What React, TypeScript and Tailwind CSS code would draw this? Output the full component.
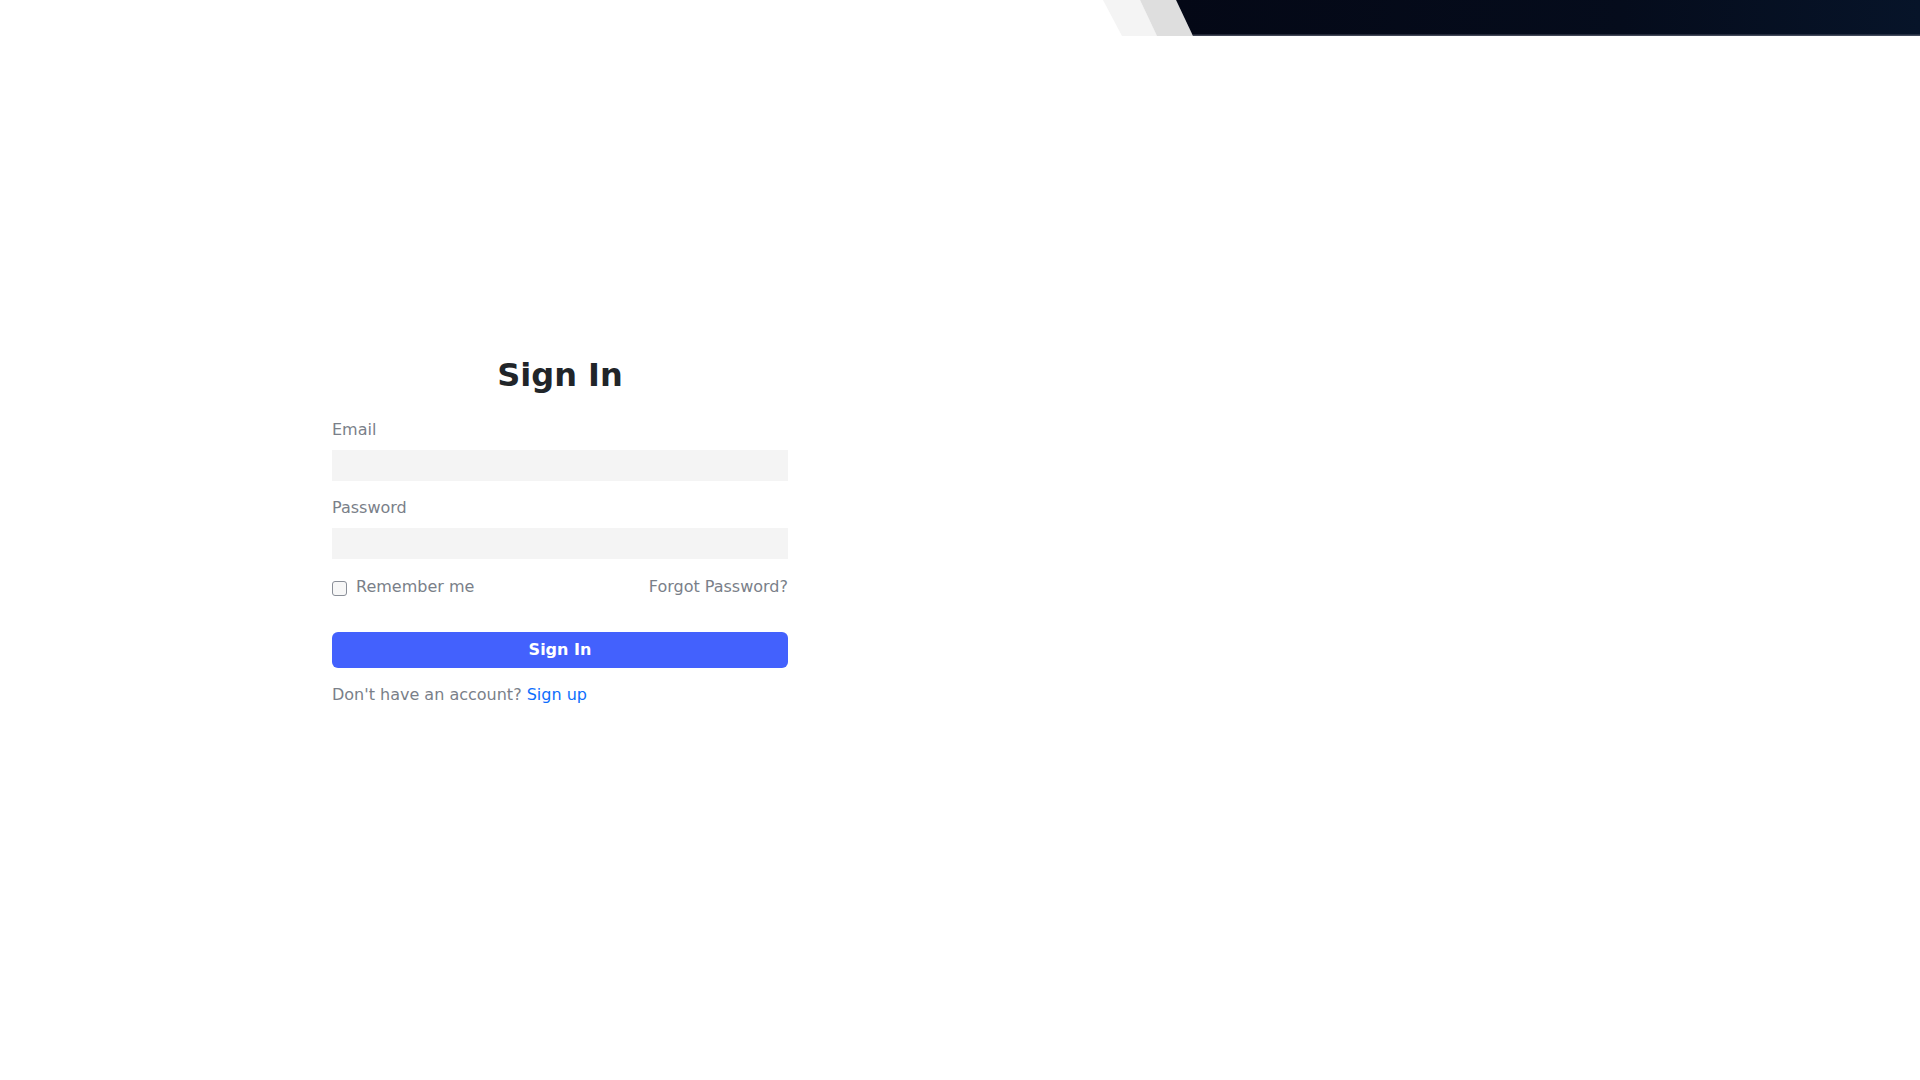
import React from "react";

export default function App() {
  return (
    <div className="min-h-screen w-full bg-white" style={{ fontFamily: '"DejaVu Sans", sans-serif' }}>
      <div className="flex h-[36px] justify-end">
        <svg width="818" height="36" viewBox="0 0 818 36" className="block">
          <defs>
            <linearGradient id="dk" x1="0" y1="0" x2="1" y2="0">
              <stop offset="0" stopColor="#040816" />
              <stop offset="0.6" stopColor="#050c1c" />
              <stop offset="1" stopColor="#071429" />
            </linearGradient>
          </defs>
          <polygon points="1,0 38,0 55,36 20,36" fill="#f4f4f4" />
          <polygon points="38,0 74,0 91,36 55,36" fill="#dedede" />
          <polygon points="74,0 818,0 818,36 91,36" fill="url(#dk)" />
          <rect x="91" y="34.5" width="727" height="1.5" fill="#6b7080" opacity="0.6" />
        </svg>
      </div>
      <div className="ml-[332px] mt-[320px] w-[456px]">
        <h2 className="text-center text-[32px] font-bold leading-[38.4px] text-[#212529]">Sign In</h2>
        <div className="mt-[24px]">
          <label className="block text-[16px] leading-[24px] text-[#7a7f89]">Email</label>
          <div className="mt-[7.5px] h-[31px] w-full bg-[#f4f4f4]" />
        </div>
        <div className="mt-[15.5px]">
          <label className="block text-[16px] leading-[24px] text-[#7a7f89]">Password</label>
          <div className="mt-[7.5px] h-[31px] w-full bg-[#f4f4f4]" />
        </div>
        <div className="mt-[16.5px] flex h-[24px] items-center justify-between text-[16px] leading-[24px] text-[#7a7f89]">
          <div className="flex items-center">
            <span className="mt-[3px] h-[15px] w-[15px] rounded-[3px] border border-[#8a8f98] bg-[#f7f7f7]" />
            <span className="ml-[9px]">Remember me</span>
          </div>
          <span>Forgot Password?</span>
        </div>
        <button className="mt-[32.5px] flex h-[36px] w-full items-center justify-center rounded-[6px] bg-[#4361fd] text-[16px] font-bold text-white">
          Sign In
        </button>
        <p className="mt-[15.5px] text-[16px] leading-[24px] text-[#7a7f89]">
          Don't have an account? <span className="text-[#0d6efd]">Sign up</span>
        </p>
      </div>
    </div>
  );
}
